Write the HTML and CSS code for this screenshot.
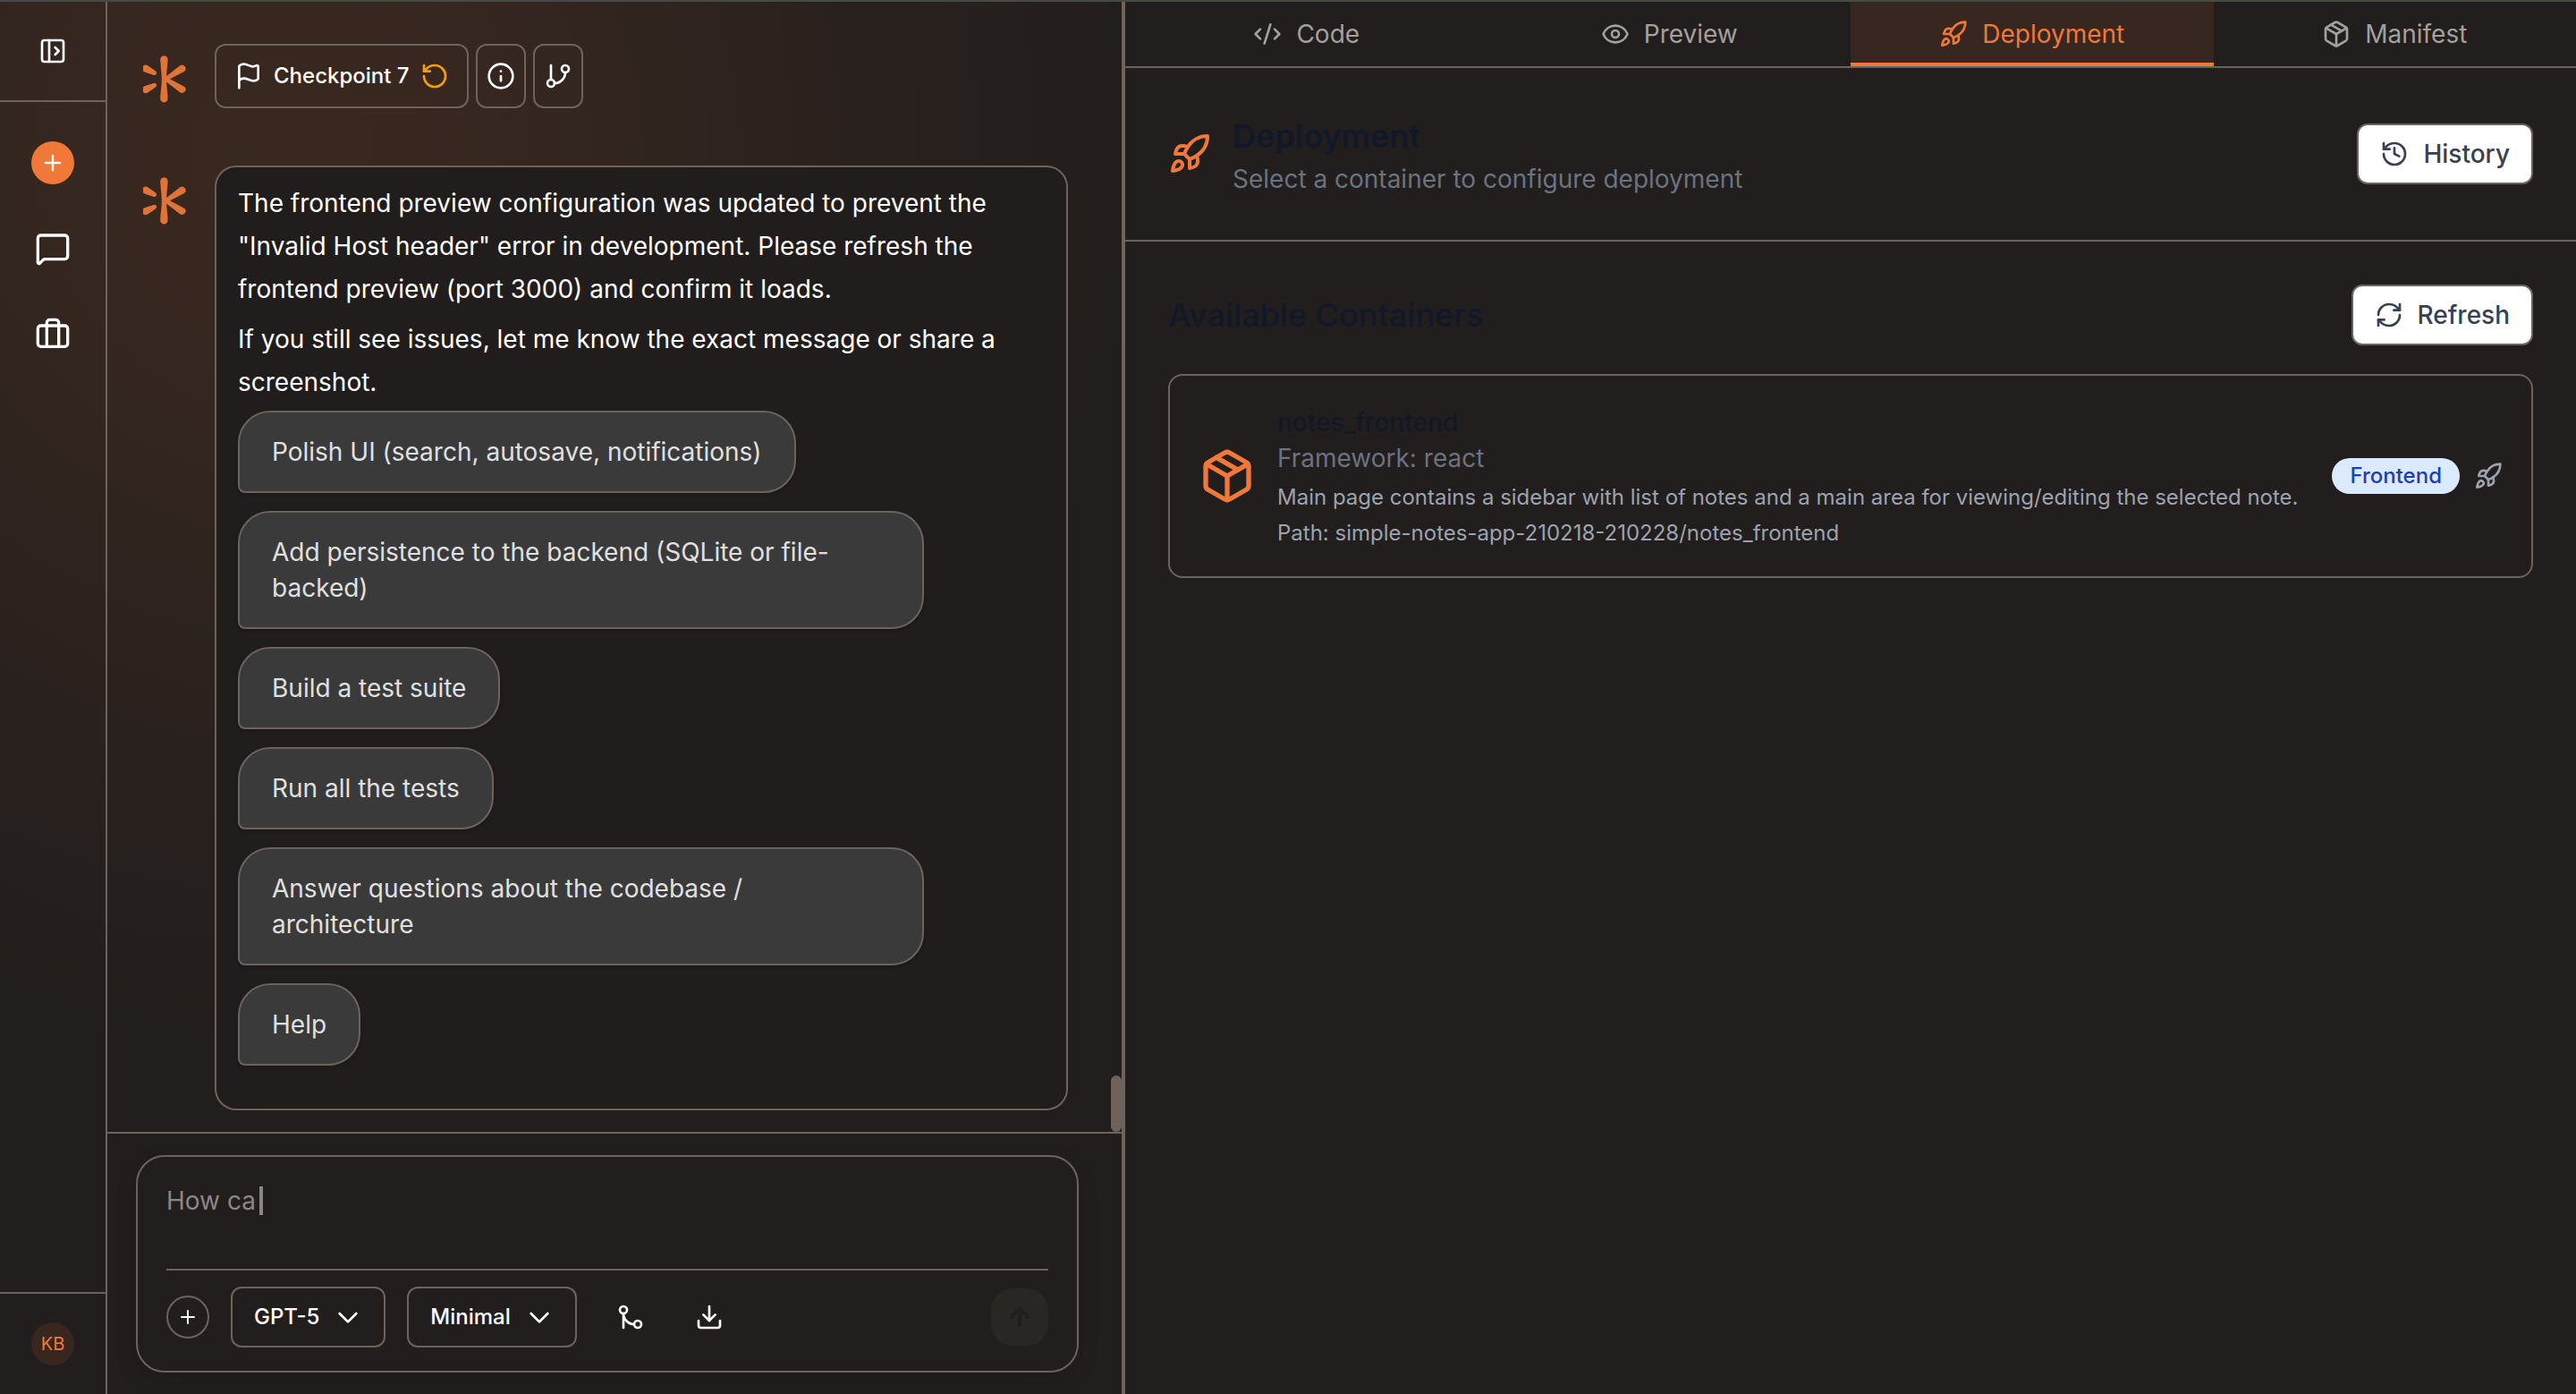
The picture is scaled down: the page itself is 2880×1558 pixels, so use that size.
FILE: index.html
```html
<!DOCTYPE html>
<html lang="en">
<head>
<meta charset="utf-8">
<meta name="viewport" content="width=device-width, initial-scale=1">
<title>Deployment</title>
<link rel="stylesheet" href="styles.css">
</head>
<body>
<svg class="sprite" aria-hidden="true">
  <symbol id="i-panel" viewBox="0 0 24 24"><rect width="18" height="18" x="3" y="3" rx="2"/><path d="M9 3v18"/><path d="m14 9 3 3-3 3"/></symbol>
  <symbol id="i-plus" viewBox="0 0 24 24"><path d="M5 12h14"/><path d="M12 5v14"/></symbol>
  <symbol id="i-message" viewBox="0 0 24 24"><path d="M22 17a2 2 0 0 1-2 2H6.828a2 2 0 0 0-1.414.586l-2.202 2.202A.71.71 0 0 1 2 21.286V5a2 2 0 0 1 2-2h16a2 2 0 0 1 2 2z"/></symbol>
  <symbol id="i-briefcase" viewBox="0 0 24 24"><path d="M16 20V4a2 2 0 0 0-2-2h-4a2 2 0 0 0-2 2v16"/><rect width="20" height="14" x="2" y="6" rx="2"/></symbol>
  <symbol id="i-flag" viewBox="0 0 24 24"><path d="M4 22V4a1 1 0 0 1 .4-.8A6 6 0 0 1 8 2c3 0 5 2 7.333 2q2 0 3.067-.8A1 1 0 0 1 20 4v10a1 1 0 0 1-.4.8A6 6 0 0 1 16 16c-3 0-5-2-8-2a6 6 0 0 0-4 1.528"/></symbol>
  <symbol id="i-restore" viewBox="0 0 24 24"><path d="M3 12a9 9 0 1 0 9-9 9.75 9.75 0 0 0-6.74 2.74L3 8"/><path d="M3 3v5h5"/></symbol>
  <symbol id="i-info" viewBox="0 0 24 24"><circle cx="12" cy="12" r="10"/><path d="M12 16v-4"/><path d="M12 8h.01"/></symbol>
  <symbol id="i-branch" viewBox="0 0 24 24"><path d="M6 3v12"/><circle cx="18" cy="6" r="3"/><circle cx="6" cy="18" r="3"/><path d="M18 9a9 9 0 0 1-9 9"/></symbol>
  <symbol id="i-merge" viewBox="0 0 24 24"><circle cx="18" cy="18" r="3"/><circle cx="6" cy="6" r="3"/><path d="M6 21V9a9 9 0 0 0 9 9"/></symbol>
  <symbol id="i-download" viewBox="0 0 24 24"><path d="M12 15V3"/><path d="M21 15v4a2 2 0 0 1-2 2H5a2 2 0 0 1-2-2v-4"/><path d="m7 10 5 5 5-5"/></symbol>
  <symbol id="i-chevron" viewBox="0 0 24 24"><path d="m5 9 7 7 7-7"/></symbol>
  <symbol id="i-up" viewBox="0 0 24 24"><path d="m5 12 7-7 7 7"/><path d="M12 19V5"/></symbol>
  <symbol id="i-code" viewBox="0 0 24 24"><path d="m18 16 4-4-4-4"/><path d="m6 8-4 4 4 4"/><path d="m14.5 4-5 16"/></symbol>
  <symbol id="i-eye" viewBox="0 0 24 24"><path d="M2.062 12.348a1 1 0 0 1 0-.696 10.75 10.75 0 0 1 19.876 0 1 1 0 0 1 0 .696 10.75 10.75 0 0 1-19.876 0"/><circle cx="12" cy="12" r="3"/></symbol>
  <symbol id="i-rocket" viewBox="0 0 24 24"><path d="M4.5 16.5c-1.5 1.26-2 5-2 5s3.74-.5 5-2c.71-.84.7-2.13-.09-2.91a2.18 2.18 0 0 0-2.91-.09z"/><path d="m12 15-3-3a22 22 0 0 1 2-3.950A12.880 12.880 0 0 1 22 2c0 2.720-.780 7.500-6 11a22.350 22.350 0 0 1-4 2z"/><path d="M9 12H4s.55-3.030 2-4c1.620-1.080 5 0 5 0"/><path d="M12 15v5s3.030-.55 4-2c1.080-1.620 0-5 0-5"/></symbol>
  <symbol id="i-package" viewBox="0 0 24 24"><path d="M11 21.730a2 2 0 0 0 2 0l7-4A2 2 0 0 0 21 16V8a2 2 0 0 0-1-1.730l-7-4a2 2 0 0 0-2 0l-7 4A2 2 0 0 0 3 8v8a2 2 0 0 0 1 1.730z"/><path d="M12 22V12"/><path d="M3.290 7 12 12l8.710-5"/><path d="m7.500 4.270 9 5.150"/></symbol>
  <symbol id="i-history" viewBox="0 0 24 24"><path d="M3 12a9 9 0 1 0 9-9 9.750 9.750 0 0 0-6.740 2.740L3 8"/><path d="M3 3v5h5"/><path d="M12 7v5l4 2"/></symbol>
  <symbol id="i-refresh" viewBox="0 0 24 24"><path d="M3 12a9 9 0 0 1 9-9 9.750 9.750 0 0 1 6.740 2.740L21 8"/><path d="M21 3v5h-5"/><path d="M21 12a9 9 0 0 1-9 9 9.750 9.750 0 0 1-6.740-2.740L3 16"/><path d="M8 16H3v5"/></symbol>
  <symbol id="i-logo" viewBox="0 0 48 56">
    <path d="M19.200 5.500a4.200 4.200 0 0 1 8.400 0C27.400 12 26.400 18 26.200 24L41 12.600a4 4 0 0 1 5 6.300L30 27.300l16 8.400a4 4 0 0 1-5 6.300L26.200 30.800C26.400 37 27.400 43 27.600 49.300a4.200 4.200 0 0 1-8.400 0C19.600 40 20.800 35 20.800 27.400S19.600 15 19.200 5.500z"/>
    <path d="M0 12.700a4.300 4.300 0 0 1 5.500-.1l8.300 5.600c2.600 2.400.8 5.200-2 4.700L2.200 19.700 0 18.500z"/>
    <path d="M0 42.100a4.300 4.300 0 0 0 5.500.1l8.300-5.600c2.600-2.400.8-5.200-2-4.700L2.200 35.100 0 36.300z"/>
  </symbol>
</svg>

<div class="app">
  <nav class="rail" aria-label="Main">
    <div class="rail-head">
      <button class="bare" aria-label="Expand sidebar"><svg class="icon"><use href="#i-panel"/></svg></button>
    </div>
    <div class="rail-links">
      <button class="bare new-chat" aria-label="New"><svg class="icon icon-sm"><use href="#i-plus"/></svg></button>
      <a href="#chats" aria-label="Chats"><svg class="icon icon-md"><use href="#i-message"/></svg></a>
      <a href="#projects" aria-label="Projects"><svg class="icon icon-md"><use href="#i-briefcase"/></svg></a>
    </div>
    <div class="rail-foot"><button class="bare avatar">KB</button></div>
  </nav>

  <section class="chat" aria-label="Conversation">
    <div class="thread">
      <div class="entry">
        <svg class="logo" aria-hidden="true"><use href="#i-logo"/></svg>
        <div class="checkpoint">
          <button class="outline checkpoint-main"><svg class="icon"><use href="#i-flag"/></svg>Checkpoint 7<svg class="icon restore"><use href="#i-restore"/></svg></button>
          <button class="outline square" aria-label="Checkpoint details"><svg class="icon"><use href="#i-info"/></svg></button>
          <button class="outline square" aria-label="Branch"><svg class="icon"><use href="#i-branch"/></svg></button>
        </div>
      </div>
      <div class="entry">
        <svg class="logo" aria-hidden="true"><use href="#i-logo"/></svg>
        <article class="message">
          <p>The frontend preview configuration was updated to prevent the "Invalid Host header" error in development. Please refresh the frontend preview (port 3000) and confirm it loads.</p>
          <p>If you still see issues, let me know the exact message or share a screenshot.</p>
          <div class="suggestions">
            <button class="suggestion">Polish UI (search, autosave, notifications)</button>
            <button class="suggestion">Add persistence to the backend (SQLite or file-backed)</button>
            <button class="suggestion">Build a test suite</button>
            <button class="suggestion">Run all the tests</button>
            <button class="suggestion">Answer questions about the codebase / architecture</button>
            <button class="suggestion">Help</button>
          </div>
        </article>
      </div>
      <span class="scroll-thumb"></span>
    </div>
    <div class="composer-wrap">
      <form class="composer">
        <div class="prompt">
          <label class="prompt-hint" for="prompt">How ca<span class="caret"></span></label>
          <textarea id="prompt"></textarea>
        </div>
        <div class="tools">
          <button type="button" class="outline attach" aria-label="Attach"><svg class="icon icon-xs"><use href="#i-plus"/></svg></button>
          <button type="button" class="outline picker">GPT-5<svg class="icon"><use href="#i-chevron"/></svg></button>
          <button type="button" class="outline picker">Minimal<svg class="icon"><use href="#i-chevron"/></svg></button>
          <div class="tool-pair">
            <button type="button" class="bare tool" aria-label="Merge"><svg class="icon"><use href="#i-merge"/></svg></button>
            <button type="button" class="bare tool" aria-label="Download"><svg class="icon"><use href="#i-download"/></svg></button>
          </div>
          <button type="submit" class="bare send" aria-label="Send" disabled><svg class="icon"><use href="#i-up"/></svg></button>
        </div>
      </form>
    </div>
  </section>

  <main class="panel">
    <nav class="tabs" aria-label="Workspace">
      <a class="tab" href="#code"><svg class="icon"><use href="#i-code"/></svg>Code</a>
      <a class="tab" href="#preview"><svg class="icon"><use href="#i-eye"/></svg>Preview</a>
      <a class="tab active" href="#deployment" aria-current="page"><svg class="icon"><use href="#i-rocket"/></svg>Deployment</a>
      <a class="tab" href="#manifest"><svg class="icon"><use href="#i-package"/></svg>Manifest</a>
    </nav>
    <header class="panel-head">
      <svg class="icon icon-lg accent"><use href="#i-rocket"/></svg>
      <div class="grow">
        <h1>Deployment</h1>
        <p class="subtitle">Select a container to configure deployment</p>
      </div>
      <button class="light"><svg class="icon"><use href="#i-history"/></svg>History</button>
    </header>
    <section class="containers">
      <div class="containers-head">
        <h2 class="grow">Available Containers</h2>
        <button class="light"><svg class="icon"><use href="#i-refresh"/></svg>Refresh</button>
      </div>
      <article class="container-card">
        <svg class="icon icon-xl accent"><use href="#i-package"/></svg>
        <div class="grow">
          <h3>notes_frontend</h3>
          <p class="subtitle">Framework: react</p>
          <p class="detail">Main page contains a sidebar with list of notes and a main area for viewing/editing the selected note.</p>
          <p class="detail">Path: simple-notes-app-210218-210228/notes_frontend</p>
        </div>
        <div class="card-side">
          <span class="badge">Frontend</span>
          <button class="bare deploy" aria-label="Deploy"><svg class="icon"><use href="#i-rocket"/></svg></button>
        </div>
      </article>
    </section>
  </main>
</div>
</body>
</html>
```
FILE: styles.css
```css
:root {
  --bg: #221e1d;
  --line: #6e625d;
  --accent: #f07838;
}

* { box-sizing: border-box; }

body {
  margin: 0;
  background: var(--bg);
  color: #fff;
  font: 400 28px/40px Inter, "Liberation Sans", sans-serif;
}

h1, h2, h3, p { margin: 0; }

button { font: inherit; color: inherit; cursor: pointer; }

a { color: inherit; text-decoration: none; }

.sprite { position: absolute; width: 0; height: 0; }

.icon {
  display: block;
  flex: none;
  width: 32px;
  height: 32px;
  fill: none;
  stroke: currentColor;
  stroke-width: 2;
  stroke-linecap: round;
  stroke-linejoin: round;
}
.icon-xs { width: 24px; height: 24px; }
.icon-sm { width: 28px; height: 28px; }
.icon-md { width: 40px; height: 40px; }
.icon-lg { width: 48px; height: 48px; }
.icon-xl { width: 64px; height: 64px; }
.accent { color: var(--accent); }
.grow { flex: 1; min-width: 0; }

.app {
  display: grid;
  grid-template-columns: 120px minmax(0, 1138fr) minmax(0, 1622fr);
  height: 100vh;
  border-top: 2px solid #454b43;
  background: radial-gradient(ellipse 34% 66% at 11% 11%,
    rgba(240, 120, 56, .11) 0%,
    rgba(240, 120, 56, .1) 20%,
    rgba(240, 120, 56, .07) 42%,
    rgba(240, 120, 56, .035) 66%,
    rgba(240, 120, 56, .01) 86%,
    rgba(240, 120, 56, 0) 100%);
}

.bare {
  display: flex;
  align-items: center;
  justify-content: center;
  padding: 0;
  border: 0;
  background: none;
}

.outline {
  display: flex;
  align-items: center;
  justify-content: center;
  border: 2px solid var(--line);
  border-radius: 12px;
  background: none;
  font-size: 24px;
  font-weight: 500;
  line-height: 32px;
}

/* Sidebar rail */
.rail {
  display: flex;
  flex-direction: column;
  border-right: 2px solid var(--line);
}
.rail-head {
  display: flex;
  align-items: center;
  justify-content: center;
  height: 112px;
  border-bottom: 2px solid var(--line);
}
.rail-links {
  flex: 1;
  display: flex;
  flex-direction: column;
  align-items: center;
  gap: 56px;
  padding-top: 44px;
}
.new-chat {
  width: 48px;
  height: 48px;
  margin-bottom: -4px;
  border-radius: 50%;
  background: var(--accent);
}
.rail-foot {
  display: flex;
  align-items: center;
  justify-content: center;
  height: 114px;
  border-top: 2px solid var(--line);
}
.avatar {
  width: 48px;
  height: 48px;
  border-radius: 50%;
  background: #38271f;
  color: var(--accent);
  font-size: 20px;
}

/* Conversation */
.chat {
  display: flex;
  flex-direction: column;
  min-height: 0;
  border-right: 4px solid var(--line);
}
.thread {
  position: relative;
  flex: 1;
  display: flex;
  flex-direction: column;
  gap: 64px;
  min-height: 0;
  overflow: hidden;
  padding: 47px 60px 24px 40px;
}
.entry {
  display: flex;
  align-items: flex-start;
  gap: 32px;
}
.logo {
  flex: none;
  width: 48px;
  height: 56px;
  margin-top: 12px;
  fill: #e07337;
}
.checkpoint { display: flex; gap: 8px; }
.checkpoint-main { gap: 12px; height: 72px; padding: 0 20px; }
.restore { color: #f59e0b; }
.square { width: 56px; height: 72px; padding: 0; }

.message {
  flex: 1;
  display: flex;
  flex-direction: column;
  gap: 8px;
  min-width: 0;
  padding: 16px 24px 48px;
  border: 2px solid var(--line);
  border-radius: 24px;
  background: #211d1c;
  line-height: 48px;
}
.suggestions {
  display: flex;
  flex-direction: column;
  align-items: flex-start;
  gap: 20px;
}
.suggestion {
  max-width: 85%;
  padding: 24px 36px;
  border: 2px solid var(--line);
  border-radius: 36px 36px 36px 8px;
  background: #3a3a3a;
  box-shadow: 0 2px 4px rgba(0, 0, 0, .2);
  color: #e0e0e0;
  line-height: 40px;
  text-align: left;
}
.scroll-thumb {
  position: absolute;
  right: 0;
  bottom: 0;
  width: 12px;
  height: 63px;
  border-radius: 6px;
  background: var(--line);
}

.composer-wrap {
  padding: 24px 48px 24px 32px;
  border-top: 2px solid var(--line);
}
.composer {
  padding: 24px 32px 26px;
  border: 2px solid var(--line);
  border-radius: 32px;
  background: #221e1d;
  box-shadow: 0 8px 24px rgba(0, 0, 0, .12);
}
.prompt {
  display: grid;
  height: 103px;
  border-bottom: 2px solid var(--line);
}
.prompt > * { grid-area: 1 / 1; }
.prompt-hint {
  display: flex;
  align-items: center;
  align-self: start;
  gap: 4px;
  height: 50px;
  color: #8a8785;
}
.caret { width: 4px; height: 32px; background: #8a8785; }
textarea {
  width: 100%;
  height: 100%;
  padding: 4px 0;
  border: 0;
  outline: 0;
  background: none;
  color: #fff;
  font: inherit;
  resize: none;
}
.tools {
  display: flex;
  align-items: center;
  gap: 24px;
  padding-top: 18px;
}
.attach { width: 48px; height: 48px; padding: 0; border-radius: 50%; }
.picker { gap: 16px; height: 68px; padding: 0 24px; }
.tool-pair { display: flex; gap: 16px; }
.tool { width: 72px; height: 64px; }
.send {
  width: 64px;
  height: 64px;
  margin-left: auto;
  border-radius: 24px;
  background: #2a2623;
  color: #211e1b;
}
.send .icon { stroke-width: 3; }

/* Workspace panel */
.panel { background: #221e1d; }
.tabs {
  display: grid;
  grid-template-columns: repeat(4, 1fr);
  border-bottom: 2px solid var(--line);
}
.tab {
  display: flex;
  align-items: center;
  justify-content: center;
  gap: 16px;
  height: 72px;
  padding-top: 4px;
  border-bottom: 4px solid transparent;
  color: #a3a09e;
}
.tab.active {
  border-color: var(--accent);
  background: #372720;
  color: var(--accent);
}
.panel-head {
  display: flex;
  align-items: center;
  gap: 24px;
  padding: 48px;
  border-bottom: 2px solid var(--line);
}
h1, h2 { color: #111827; font-size: 36px; line-height: 56px; }
h1 { font-weight: 600; }
h2 { font-weight: 500; }
h3 { color: #111827; font-size: 28px; font-weight: 500; }
.subtitle { color: #6b7280; }
.light {
  display: flex;
  align-items: center;
  gap: 16px;
  height: 68px;
  padding: 0 24px;
  border: 2px solid var(--line);
  border-radius: 12px;
  background: #fff;
  color: #374151;
  font-weight: 500;
}
.containers { padding: 48px; }
.containers-head {
  display: flex;
  align-items: center;
  margin-bottom: 32px;
}
.container-card {
  display: flex;
  align-items: center;
  gap: 24px;
  padding: 32px;
  border: 2px solid var(--line);
  border-radius: 16px;
}
.detail {
  margin-top: 8px;
  color: #9ca3af;
  font-size: 24px;
  line-height: 32px;
}
.card-side { display: flex; align-items: center; gap: 16px; }
.badge {
  padding: 4px 20px;
  border-radius: 20px;
  background: #dbeafe;
  color: #1e40af;
  font-size: 24px;
  font-weight: 500;
  line-height: 32px;
}
.deploy { color: #9ca3af; }
```
